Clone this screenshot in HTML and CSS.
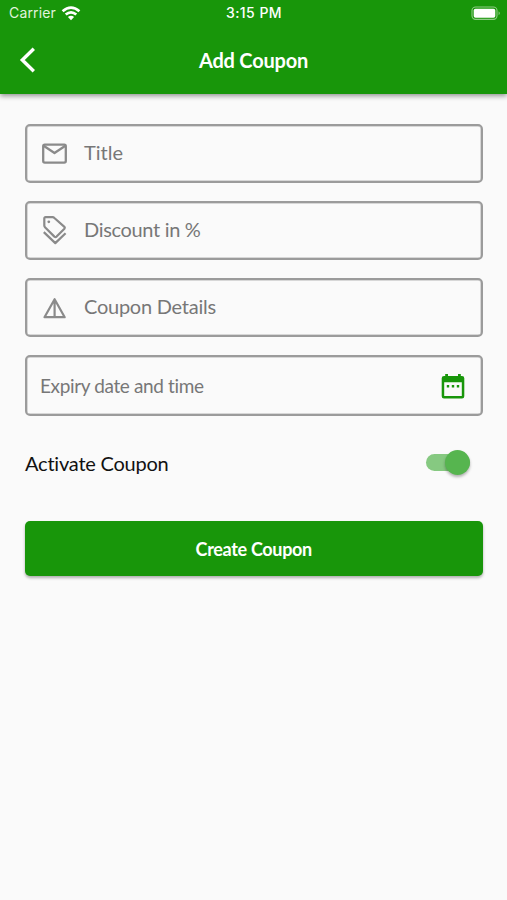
FILE: index.html
```html
<!DOCTYPE html>
<html lang="en">
<head>
<meta charset="utf-8">
<title>Add Coupon</title>
<link rel="stylesheet" href="styles.css">
</head>
<body>
<header class="top">
  <div class="status">
    <div class="carrier"><span>Carrier</span>
      <svg width="20" height="15" viewBox="0 0 20 15" fill="none" stroke="#fff" stroke-width="2.7"><path d="M1.6 5.3Q10-2.2 18.4 5.3M4.7 8.6Q10 4 15.3 8.6"/><path d="M10 14.2L6.9 11.1Q10 8.6 13.1 11.1Z" fill="#fff" stroke="none"/></svg>
    </div>
    <div class="time">3:15 PM</div>
    <div class="battery">
      <svg width="30" height="15" viewBox="0 0 30 15"><rect x="1" y="1" width="25" height="12.4" rx="3.6" fill="none" stroke="#8fcb86" stroke-width="1.1"/><rect x="2.7" y="2.7" width="21.6" height="9" rx="1.8" fill="#fff"/><path d="M27.6 5.2Q30 7.2 27.6 9.2Z" fill="#8fcb86"/></svg>
    </div>
  </div>
  <div class="bar">
    <svg class="back" width="18" height="26" viewBox="0 0 18 26" fill="none" stroke="#fff" stroke-width="3.4"><path d="M15.8 1.8L4.3 13L15.8 24.2"/></svg>
    <h1>Add Coupon</h1>
  </div>
</header>
<main>
  <div class="field">
    <svg width="28" height="32" viewBox="0 0 28 32" fill="none" stroke="#8a8a8a" stroke-width="2.3" stroke-linejoin="round"><rect x="2.2" y="6.6" width="22.6" height="18" rx="1.6"/><path d="M2.6 7.8L13.5 15L24.4 7.8"/></svg>
    <span>Title</span>
  </div>
  <div class="field">
    <svg width="28" height="32" viewBox="0 0 28 32" fill="none" stroke="#8a8a8a" stroke-width="2.2" stroke-linejoin="round"><path d="M4.6 2.2H11.6Q12.6 2.2 13.4 3L23.4 11.8Q24.2 12.8 23.4 13.7L15.6 21.6Q14.5 22.5 13.4 21.6L4 12.3Q3.3 11.6 3.3 10.6V3.5Q3.3 2.2 4.6 2.2ZM2.8 17.1L14.3 28.1L24.6 18.2"/><circle cx="7.8" cy="6.8" r="1.4" fill="#8a8a8a" stroke="none"/></svg>
    <span class="discount">Discount in %</span>
  </div>
  <div class="field">
    <svg width="28" height="32" viewBox="0 0 28 32" fill="none" stroke="#8a8a8a" stroke-width="2.2" stroke-linejoin="round"><path d="M13.6 7.2L23.7 25.2H3.5ZM13.6 7V25"/></svg>
    <span class="details">Coupon Details</span>
  </div>
  <div class="field date">
    <span>Expiry date and time</span>
    <svg width="24" height="27" viewBox="0 0 24 27"><path fill="#18960a" fill-rule="evenodd" d="M4.2 1H7V3H17V1H19.8V3H21Q23.3 3 23.3 5.3V23.2Q23.3 25.5 21 25.5H3Q.7 25.5 .7 23.2V5.3Q.7 3 3 3H4.2ZM3.2 9.3V23H20.8V9.3ZM5.8 12H8.2V14.4H5.8ZM10.8 12H13.2V14.4H10.8ZM15.8 12H18.2V14.4H15.8Z"/></svg>
  </div>
  <div class="activate">
    <span>Activate Coupon</span>
    <div class="switch"><div class="knob"></div></div>
  </div>
  <button class="create">Create Coupon</button>
</main>
</body>
</html>
```
FILE: styles.css
```css
* { box-sizing: border-box; }
body { margin: 0; min-height: 900px; background: #fafafa; font-family: Lato, sans-serif; font-variant-ligatures: none; }
.top { height: 94px; background: #18960a; color: #fff; box-shadow: 0 2px 5px rgba(0,0,0,.42); }
.status { height: 27px; padding: 0 6px 1px 9px; display: grid; grid-template-columns: 1fr auto 1fr; align-items: center; font: 14px/26px Inter, sans-serif; }
.carrier { display: flex; align-items: center; gap: 5px; color: #e0f3dd; letter-spacing: .15px; }
.time { font-size: 14px; font-weight: 500; letter-spacing: .45px; margin-right: 2px; }
.battery { display: flex; justify-content: flex-end; }
.bar { height: 67px; padding: 0 18px; display: grid; grid-template-columns: 18px 1fr 18px; align-items: center; }
.back { margin-bottom: 1px; }
h1 { margin: 0 0 1px; text-align: center; font-size: 20px; line-height: 24px; font-weight: 700; letter-spacing: -.2px; }
main { padding: 30px 24.5px 0 25px; }
.field { height: 59px; margin-bottom: 18px; padding: 0 14px; display: flex; align-items: center; gap: 15px; border: 2px solid #9b9b9b; border-radius: 5px; box-shadow: inset 0 0 0 .5px #b4b4b4; color: #777; font-size: 20px; line-height: 24px; }
.field span { margin-top: -4px; }
.field .discount { letter-spacing: -.33px; }
.field .details { letter-spacing: -.25px; }
.date { height: 61px; margin-bottom: 0; padding: 0 15.5px 0 13px; justify-content: space-between; font-size: 19px; letter-spacing: -.37px; }
.date span { margin-top: 1px; }
.date svg { margin-top: 1px; }
.activate { height: 105px; padding: 0 12.5px 12px 0; display: flex; align-items: center; justify-content: space-between; color: #111; font-size: 20px; line-height: 24px; letter-spacing: -.22px; }
.switch { width: 44px; height: 17px; display: flex; align-items: center; justify-content: flex-end; border-radius: 9px; background: #86c981; }
.knob { flex: none; width: 25px; height: 25px; border-radius: 50%; background: #56b54f; box-shadow: 0 2px 3px rgba(0,0,0,.3); }
.create { display: block; width: 100%; height: 55px; padding: 1px 0 0; border: 0; border-radius: 5px; background: #18960a; color: #fff; font: 700 18px/22px Lato, sans-serif; letter-spacing: -.32px; box-shadow: 0 2px 3px rgba(0,0,0,.3); }
```
